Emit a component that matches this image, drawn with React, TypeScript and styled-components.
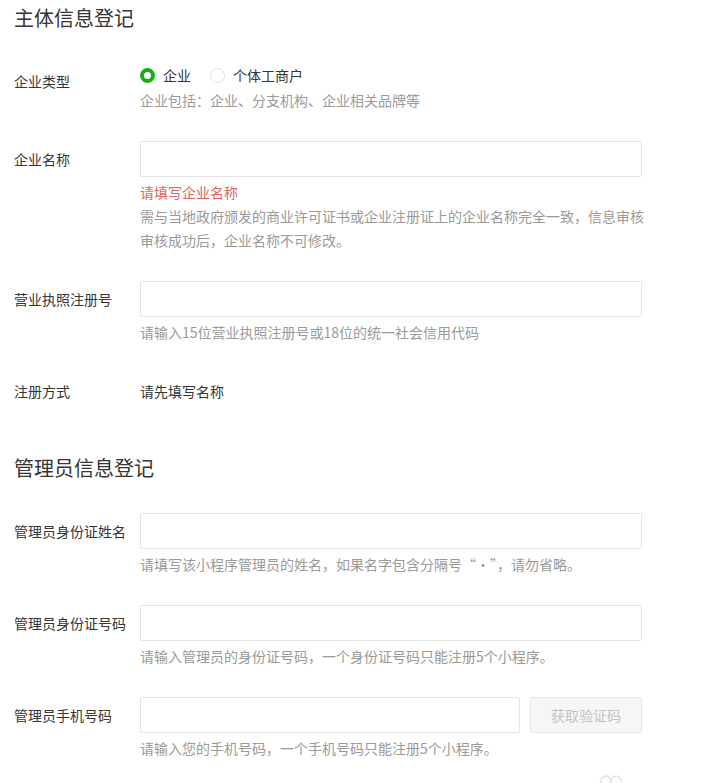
import * as React from 'react'
import styled, { createGlobalStyle } from 'styled-components'

const GlobalStyle = createGlobalStyle`
  html, body {
    margin: 0;
    padding: 0;
    background: #fff;
  }
  body {
    font-family: "Noto Sans CJK SC", "Noto Sans", sans-serif;
    color: #353535;
    font-size: 14px;
  }
`

const Page = styled.div`
  position: relative;
  padding: 0 14px;
  min-height: 783px;
  box-sizing: border-box;
  overflow: hidden;
`

const SectionTitle = styled.h2<{ $first?: boolean }>`
  margin: ${props => (props.$first ? '0' : '41px')} 0 27px;
  font-size: 20px;
  font-weight: normal;
  line-height: 36px;
  color: #353535;
`

const Row = styled.div`
  display: flex;
  align-items: flex-start;
  margin-bottom: 29px;
`

const Label = styled.div`
  width: 126px;
  flex-shrink: 0;
  line-height: 36px;
  font-size: 14px;
  color: #353535;
  white-space: nowrap;
`

const Field = styled.div`
  flex: 1;
  min-width: 0;
`

const Input = styled.input<{ $width?: number }>`
  display: block;
  box-sizing: border-box;
  width: ${props => props.$width || 502}px;
  height: 36px;
  border: 1px solid #e4e4e4;
  border-radius: 2px;
  background: #fff;
  padding: 0 10px;
  font: inherit;
  outline: none;
`

const InputLine = styled.div`
  display: flex;
  gap: 10px;
  align-items: center;
`

const CodeButton = styled.button`
  width: 112px;
  height: 36px;
  box-sizing: border-box;
  border: 1px solid #e6e6e6;
  border-radius: 2px;
  background: #f5f6f5;
  color: #c3c3c3;
  font: inherit;
  font-size: 14px;
  margin-top: -1px;
`

const Hint = styled.div<{ $error?: boolean; $top?: number }>`
  margin-top: ${props => props.$top || 0}px;
  line-height: 24px;
  font-size: 14px;
  color: ${props => (props.$error ? '#df6461' : '#9a9a9a')};
`

const Value = styled.div`
  line-height: 36px;
  color: #353535;
`

const RadioGroup = styled.div`
  display: flex;
  align-items: center;
  height: 24px;
  gap: 19px;
`

const RadioItem = styled.label`
  display: flex;
  align-items: center;
  gap: 8px;
  line-height: 24px;
  color: #353535;
`

const RadioMark = styled.span<{ $checked?: boolean }>`
  display: inline-block;
  box-sizing: border-box;
  width: 15px;
  height: 15px;
  border-radius: 50%;
  border: ${props => (props.$checked ? '4px solid #1aad19' : '1px solid #e2e2e2')};
  background: #fff;
`

const Float = styled.div`
  position: absolute;
  left: 598px;
  top: 771px;
`

export default function App() {
  return (
    <Page>
      <GlobalStyle />
      <SectionTitle $first>主体信息登记</SectionTitle>

      <Row>
        <Label>企业类型</Label>
        <Field>
          <RadioGroup>
            <RadioItem>
              <RadioMark $checked />
              企业
            </RadioItem>
            <RadioItem>
              <RadioMark />
              个体工商户
            </RadioItem>
          </RadioGroup>
          <Hint $top={1}>企业包括：企业、分支机构、企业相关品牌等</Hint>
        </Field>
      </Row>

      <Row>
        <Label>企业名称</Label>
        <Field>
          <Input />
          <Hint $error $top={3}>请填写企业名称</Hint>
          <Hint>需与当地政府颁发的商业许可证书或企业注册证上的企业名称完全一致，信息审核</Hint>
          <Hint>审核成功后，企业名称不可修改。</Hint>
        </Field>
      </Row>

      <Row>
        <Label>营业执照注册号</Label>
        <Field>
          <Input />
          <Hint $top={3}>请输入15位营业执照注册号或18位的统一社会信用代码</Hint>
        </Field>
      </Row>

      <Row>
        <Label>注册方式</Label>
        <Field>
          <Value>请先填写名称</Value>
        </Field>
      </Row>

      <SectionTitle>管理员信息登记</SectionTitle>

      <Row>
        <Label>管理员身份证姓名</Label>
        <Field>
          <Input />
          <Hint $top={3}>请填写该小程序管理员的姓名，如果名字包含分隔号“·”，请勿省略。</Hint>
        </Field>
      </Row>

      <Row>
        <Label>管理员身份证号码</Label>
        <Field>
          <Input />
          <Hint $top={3}>请输入管理员的身份证号码，一个身份证号码只能注册5个小程序。</Hint>
        </Field>
      </Row>

      <Row>
        <Label>管理员手机号码</Label>
        <Field>
          <InputLine>
            <Input $width={380} />
            <CodeButton>获取验证码</CodeButton>
          </InputLine>
          <Hint $top={3}>请输入您的手机号码，一个手机号码只能注册5个小程序。</Hint>
        </Field>
      </Row>

      <Float>
        <svg width="26" height="14" viewBox="0 0 26 14">
          <ellipse cx="8" cy="10" rx="5.5" ry="7" fill="none" stroke="#e2e2e2" strokeWidth="1.5" />
          <ellipse cx="18" cy="10" rx="5.5" ry="7" fill="none" stroke="#e2e2e2" strokeWidth="1.5" />
        </svg>
      </Float>
    </Page>
  )
}
